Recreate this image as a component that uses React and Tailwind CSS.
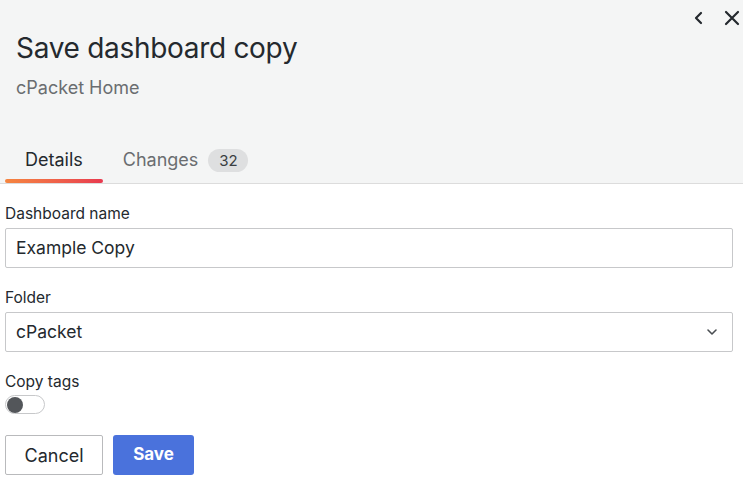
import React from "react";

export default function App() {
  return (
    <div className="w-[743px] h-[484px] bg-white overflow-hidden text-[#24292e]" style={{ fontFamily: "Inter, 'Noto Sans', sans-serif" }}>
      {/* Header */}
      <div className="relative bg-[#f4f5f5] border-b border-[#dcdcdc]">
        <div className="absolute top-[9px] right-[2px] flex items-center gap-[16px]">
          <svg width="16" height="16" viewBox="0 0 16 16" fill="none" stroke="#24292e" strokeWidth="2.2" strokeLinecap="round" strokeLinejoin="round">
            <path d="M10 3 L5 8 L10 13" />
          </svg>
          <svg width="18" height="18" viewBox="0 0 18 18" fill="none" stroke="#24292e" strokeWidth="2.2" strokeLinecap="round">
            <path d="M3 3 L15 15 M15 3 L3 15" />
          </svg>
        </div>
        <div className="pl-[16px] pt-[30px]">
          <h1 className="text-[28px] leading-[36px] font-normal tracking-[-0.3px]">Save dashboard copy</h1>
          <p className="mt-[10px] text-[18px] leading-[24px] text-[#6a6d70]">cPacket Home</p>
        </div>
        <div className="flex pl-[5px] mt-[48px]">
          <div className="relative px-[20px] pb-[11px] text-[18px] leading-[24px] text-[#24292e]">
            Details
            <div className="absolute left-0 right-0 bottom-0 h-[4px] rounded-full bg-gradient-to-r from-[#f5853f] to-[#e8394f]" />
          </div>
          <div className="flex items-start pl-[20px] text-[18px] leading-[24px] text-[#6a6d70]">
            Changes
            <span className="ml-[10px] mt-[1px] h-[23px] w-[40px] text-center rounded-full bg-[#dedfe0] text-[15px] leading-[23px] text-[#3a3e42]">32</span>
          </div>
        </div>
      </div>

      {/* Form */}
      <div className="pl-[5px] pr-[10px] pt-[20px]">
        <div className="text-[15.5px] leading-[20px] text-[#24292e]">Dashboard name</div>
        <div className="mt-[4px] h-[40px] border border-[#c7c8ca] rounded-[2px] flex items-center px-[10px] text-[17.5px]">
          Example Copy
        </div>

        <div className="mt-[20px] text-[15.5px] leading-[20px]">Folder</div>
        <div className="mt-[4px] h-[40px] border border-[#c7c8ca] rounded-[2px] flex items-center justify-between pl-[10px] pr-[14px] text-[17.5px]">
          <span>cPacket</span>
          <svg width="12" height="12" viewBox="0 0 12 12" fill="none" stroke="#4a4e52" strokeWidth="1.6" strokeLinecap="round" strokeLinejoin="round">
            <path d="M2 4 L6 8 L10 4" />
          </svg>
        </div>

        <div className="mt-[20px] text-[15.5px] leading-[20px]">Copy tags</div>
        <div className="mt-[3px] w-[40px] h-[19px] rounded-full border border-[#c7c8ca] flex items-center pl-[1px]">
          <div className="w-[16px] h-[16px] rounded-full bg-[#53565a]" />
        </div>

        <div className="mt-[21px] flex gap-[10px]">
          <button className="h-[40px] w-[98px] border border-[#b9babc] rounded-[2px] bg-white text-[18px] text-[#24292e]">Cancel</button>
          <button className="h-[40px] w-[81px] rounded-[3px] bg-[#4a72dc] text-white text-[17px] font-bold">Save</button>
        </div>
      </div>
    </div>
  );
}
